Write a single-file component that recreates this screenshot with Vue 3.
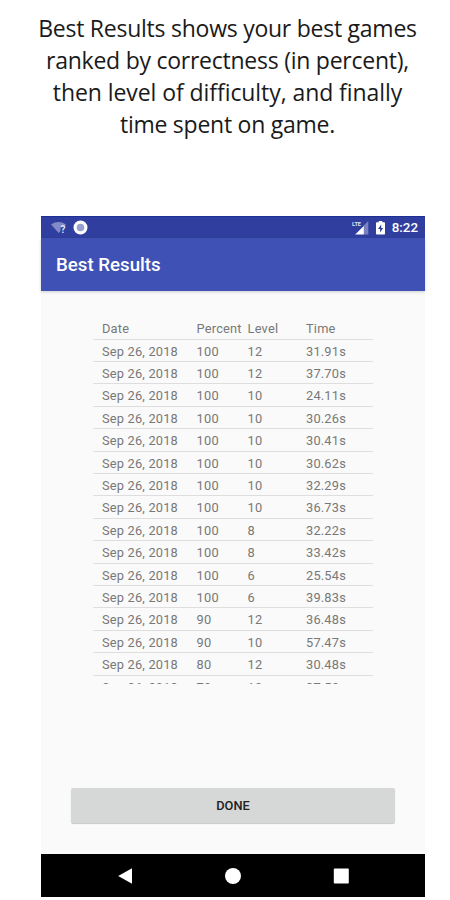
<template>
  <div class="page">
    <p class="caption">
      <span v-for="line in caption" :key="line">{{ line }}</span>
    </p>

    <div class="phone">
      <div class="status-bar">
        <svg class="wifi" width="17" height="14" viewBox="0 0 17 14">
          <path d="M0 3.4Q7.5 -1.4 15 3.4L12.6 6H9.5V10.1L7.7 12Z" fill="#fff" opacity="0.4" />
          <text class="glyph" x="9.6" y="12.4" font-size="10">?</text>
        </svg>
        <svg class="sync" width="15" height="15" viewBox="0 0 15 15">
          <circle cx="7.5" cy="7.5" r="4.6" fill="#97a0d2" />
          <circle cx="7.5" cy="7.5" r="5.4" fill="none" stroke="#fff" stroke-width="3.2" />
        </svg>
        <span class="spacer"></span>
        <svg class="signal" width="17" height="14" viewBox="0 0 17 14">
          <path d="M16.3 0V13.5H11.4V4.8Z" fill="#fff" opacity="0.35" />
          <path d="M11.8 4.9V13.5H3.2Z" fill="#fff" />
          <text class="glyph" x="0" y="5.2" font-size="5.4" textLength="9" lengthAdjust="spacingAndGlyphs">LTE</text>
        </svg>
        <svg class="battery" width="9" height="14" viewBox="0 0 9 14">
          <path d="M2.7 0H6.3V1.3H8.2Q9 1.3 9 2.1V12.7Q9 13.5 8.2 13.5H.8Q0 13.5 0 12.7V2.1Q0 1.3 .8 1.3H2.7Z" fill="#fff" />
          <path d="M5.2 3.6L2 8H4.1V11.5L7.1 6.9H5.2Z" fill="#303f9f" />
        </svg>
        <span class="clock">8:22</span>
      </div>

      <header class="app-bar">Best Results</header>

      <main class="content">
        <div class="results">
          <div class="row">
            <span>Date</span>
            <span>Percent</span>
            <span>Level</span>
            <span>Time</span>
          </div>
          <div v-for="(game, index) in games" :key="index" class="row">
            <span>Sep 26, 2018</span>
            <span>{{ game.percent }}</span>
            <span>{{ game.level }}</span>
            <span>{{ game.time }}s</span>
          </div>
        </div>
        <button class="done" type="button">DONE</button>
      </main>

      <nav class="nav-bar">
        <svg width="384" height="43" viewBox="0 0 384 43">
          <path d="M77.2 22L91 14.2V29.8Z" fill="#fff" />
          <circle cx="192" cy="22" r="8" fill="#fff" />
          <rect x="292.8" y="14.6" width="15" height="15" rx="0.8" fill="#fff" />
        </svg>
      </nav>
    </div>
  </div>
</template>

<script setup>
const caption = [
  'Best Results shows your best games',
  'ranked by correctness (in percent),',
  'then level of difficulty, and finally',
  'time spent on game.'
]

const games = [
  { percent: 100, level: 12, time: '31.91' },
  { percent: 100, level: 12, time: '37.70' },
  { percent: 100, level: 10, time: '24.11' },
  { percent: 100, level: 10, time: '30.26' },
  { percent: 100, level: 10, time: '30.41' },
  { percent: 100, level: 10, time: '30.62' },
  { percent: 100, level: 10, time: '32.29' },
  { percent: 100, level: 10, time: '36.73' },
  { percent: 100, level: 8, time: '32.22' },
  { percent: 100, level: 8, time: '33.42' },
  { percent: 100, level: 6, time: '25.54' },
  { percent: 100, level: 6, time: '39.83' },
  { percent: 90, level: 12, time: '36.48' },
  { percent: 90, level: 10, time: '57.47' },
  { percent: 80, level: 12, time: '30.48' },
  { percent: 70, level: 10, time: '37.52' }
]
</script>

<style>
body {
  margin: 0;
  background: #fff;
}
</style>

<style scoped>
.page {
  box-sizing: border-box;
  width: 450px;
  height: 900px;
  padding-top: 12px;
  overflow: hidden;
  background: #fff;
  font-family: Roboto, "Liberation Sans", sans-serif;
}

.caption {
  display: flex;
  flex-direction: column;
  align-items: center;
  height: 204px;
  margin: 0;
  padding-left: 5px;
  font-family: "Open Sans", "Noto Sans", sans-serif;
  font-size: 23px;
  line-height: 32px;
  letter-spacing: -0.25px;
  color: #1a1a1a;
  white-space: nowrap;
}

.caption span:nth-child(3) {
  letter-spacing: -0.07px;
}

.phone {
  display: flex;
  flex-direction: column;
  width: 384px;
  height: 681px;
  margin-left: 41px;
  background: #fafafa;
}

.status-bar {
  display: flex;
  align-items: center;
  box-sizing: border-box;
  height: 22px;
  padding: 0 7px 0 10px;
  background: #303f9f;
  border-top: 1px solid #1c2f94;
}

.glyph {
  font-weight: 700;
  fill: #dfe3f6;
}

.sync {
  margin-left: 4.5px;
}

.spacer {
  flex: 1;
}

.battery {
  margin: 0 7px 0 7px;
}

.clock {
  font-size: 13.4px;
  font-weight: 500;
  color: #fff;
}

.app-bar {
  height: 52.5px;
  padding-left: 15px;
  background: #3f51b5;
  box-shadow: 0 1px 3px rgba(0, 0, 0, 0.18);
  font-size: 18.7px;
  font-weight: 500;
  line-height: 55px;
  color: #fff;
}

.content {
  display: flex;
  flex: 1;
  flex-direction: column;
  justify-content: space-between;
  padding: 26.8px 30px 31px;
}

.results {
  width: 280px;
  height: 367px;
  margin-left: 22px;
  overflow: hidden;
}

.row {
  display: grid;
  grid-template-columns: 94.6px 51px 58.4px 1fr;
  box-sizing: border-box;
  height: 22.4px;
  padding-left: 9px;
  border-bottom: 1px solid #dedede;
  font-size: 12.8px;
  line-height: 23.2px;
  letter-spacing: 0.2px;
  color: #787878;
  white-space: nowrap;
}

.done {
  height: 35px;
  padding: 0;
  border: 0;
  border-radius: 2px;
  background: #d6d7d7;
  box-shadow: 0 1px 1px rgba(0, 0, 0, 0.2);
  font-family: inherit;
  font-size: 12.8px;
  font-weight: 500;
  color: #212121;
}

.nav-bar {
  height: 43px;
  background: #000;
}
</style>
